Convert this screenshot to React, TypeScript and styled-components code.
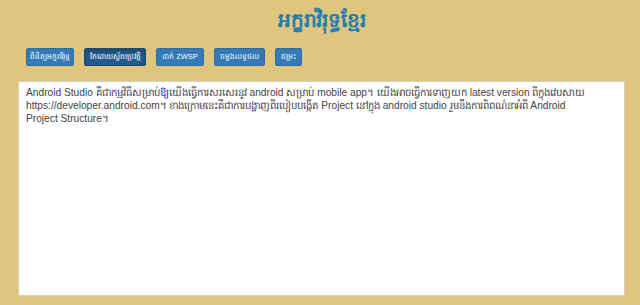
import React from 'react';
import styled, { createGlobalStyle } from 'styled-components';

const GlobalStyle = createGlobalStyle`
  html, body {
    margin: 0;
    padding: 0;
    background: #dfc57e;
  }
  body {
    font-family: "Liberation Sans", Arial, sans-serif;
  }
`;

const buttons = [
  { label: 'ពិនិត្យអក្ខរាវិរុទ្ធ', width: 48, active: false },
  { label: 'កែដោយស្វ័យប្រវត្តិ', width: 62, active: true },
  { label: 'ដាក់ ZWSP', width: 48, active: false },
  { label: 'ចម្លងលទ្ធផល', width: 51, active: false },
  { label: 'ជម្រះ', width: 27, active: false },
];

export default function App() {
  return (
    <Page>
      <GlobalStyle />
      <Title>អក្ខរាវិរុទ្ធខ្មែរ</Title>
      <Toolbar>
        {buttons.map(b => (
          <ToolButton key={b.label} $w={b.width} $active={b.active}>
            {b.label}
          </ToolButton>
        ))}
      </Toolbar>
      <Editor contentEditable suppressContentEditableWarning>
        <Line>
          Android Studio គឺជាកម្មវិធីសម្រាប់<Marked>ឱ្យ</Marked>យើងធ្វើការសរសេរនូវ android សម្រាប់
          mobile app។ យើងអាចធ្វើការទាញយក latest version ពីក្នុងវេបសាយ
        </Line>
        <Line>
          https://developer.android.com។ ខាងក្រោមនេះគឺជាការបង្ហាញពីរបៀបបង្កើត Project នៅក្នុង
          android studio រួមនឹងការពិពណ៌នាអំពី Android
        </Line>
        <Line>Project Structure។</Line>
      </Editor>
    </Page>
  );
}

const Page = styled.div`
  display: flex;
  flex-direction: column;
  width: 640px;
  height: 305px;
  box-sizing: border-box;
  padding: 8px 15px 9px 18px;
`;

const Title = styled.h1`
  margin: 0;
  height: 24px;
  line-height: 24px;
  text-align: center;
  font-size: 20px;
  font-weight: bold;
  color: #1e7fae;
  font-family: "Noto Sans", "DejaVu Sans", sans-serif;
`;

const Toolbar = styled.div`
  display: flex;
  gap: 10px;
  margin: 16px 0 15px 8px;
`;

const ToolButton = styled.button<{ $w: number; $active: boolean }>`
  width: ${p => p.$w}px;
  height: 18px;
  padding: 0 2px;
  border: 1px solid ${p => (p.$active ? '#1b4a72' : '#2e6da4')};
  border-radius: 2px;
  background: ${p => (p.$active ? '#235b8c' : '#337ab7')};
  color: #fff;
  font-family: "Liberation Sans", Arial, sans-serif;
  font-size: 7.5px;
  line-height: 16px;
  white-space: nowrap;
  text-align: center;
  box-shadow: ${p => (p.$active ? 'inset 0 2px 4px rgba(0,0,0,0.25)' : 'none')};
  cursor: pointer;
`;

const Editor = styled.div`
  flex: 1;
  background: #fff;
  border: 1px solid #d6d0c0;
  padding: 4px 7px;
  color: #444;
  font-size: 10.2px;
  line-height: 13px;
  outline: none;
  overflow: hidden;
`;

const Line = styled.div`
  white-space: nowrap;
`;

const Marked = styled.span`
  color: #1010e0;
`;
